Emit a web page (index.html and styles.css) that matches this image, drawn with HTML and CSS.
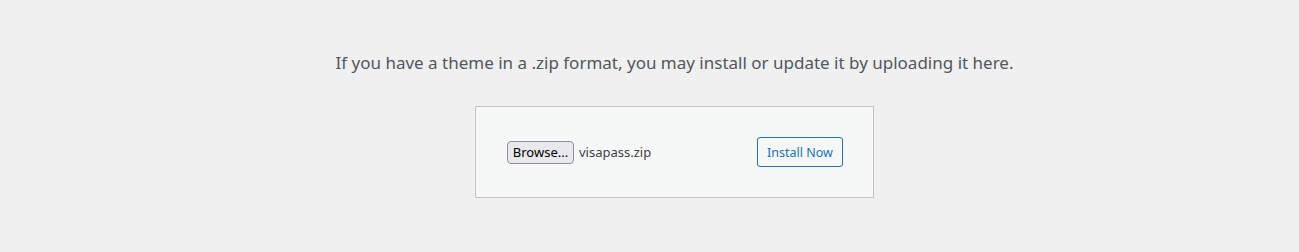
FILE: index.html
```html
<!DOCTYPE html>
<html lang="en">
<head>
  <meta charset="UTF-8" />
  <title>Upload Theme</title>
  <link rel="stylesheet" href="styles.css">
</head>
<body>
  <main class="upload-theme">
    <p class="install-help">If you have a theme in a .zip format, you may install or update it by uploading it here.</p>
    <form class="wp-upload-form">
      <div class="file-field">
        <button type="button" class="browse">Browse...</button>
        <span class="file-name">visapass.zip</span>
      </div>
      <button type="button" class="install-btn">Install Now</button>
    </form>
  </main>
</body>
</html>
```

FILE: styles.css
```css
body {
  margin: 0;
  background: #f0f0f1;
  font-family: 'Noto Sans', sans-serif;
  color: #3c434a;
}

.upload-theme {
  padding-left: 50px;
  display: flex;
  flex-direction: column;
  align-items: center;
}

.install-help {
  margin: 49px 0 0;
  font-size: 17px;
  line-height: 27px;
  color: #50575e;
  text-align: center;
}

.wp-upload-form {
  margin-top: 30px;
  width: 337px;
  padding: 30px;
  background: #f6f7f7;
  border: 1px solid #c3c4c7;
  display: flex;
  justify-content: space-between;
  align-items: center;
}

.file-field {
  display: flex;
  align-items: center;
  gap: 5px;
  padding-left: 1px;
}

.browse {
  height: 23px;
  width: 67px;
  padding: 0;
  font-family: 'Noto Sans', sans-serif;
  font-size: 13px;
  color: #000;
  background: #e9e9ed;
  border: 1px solid #8f8f9d;
  border-radius: 4px;
}

.file-name {
  font-size: 13px;
  color: #3c434a;
}

.install-btn {
  height: 30px;
  width: 86px;
  padding: 0;
  font-family: 'Noto Sans', sans-serif;
  font-size: 12.5px;
  color: #2271b1;
  background: #f6f7f7;
  border: 1px solid #2271b1;
  border-radius: 3px;
}
```
